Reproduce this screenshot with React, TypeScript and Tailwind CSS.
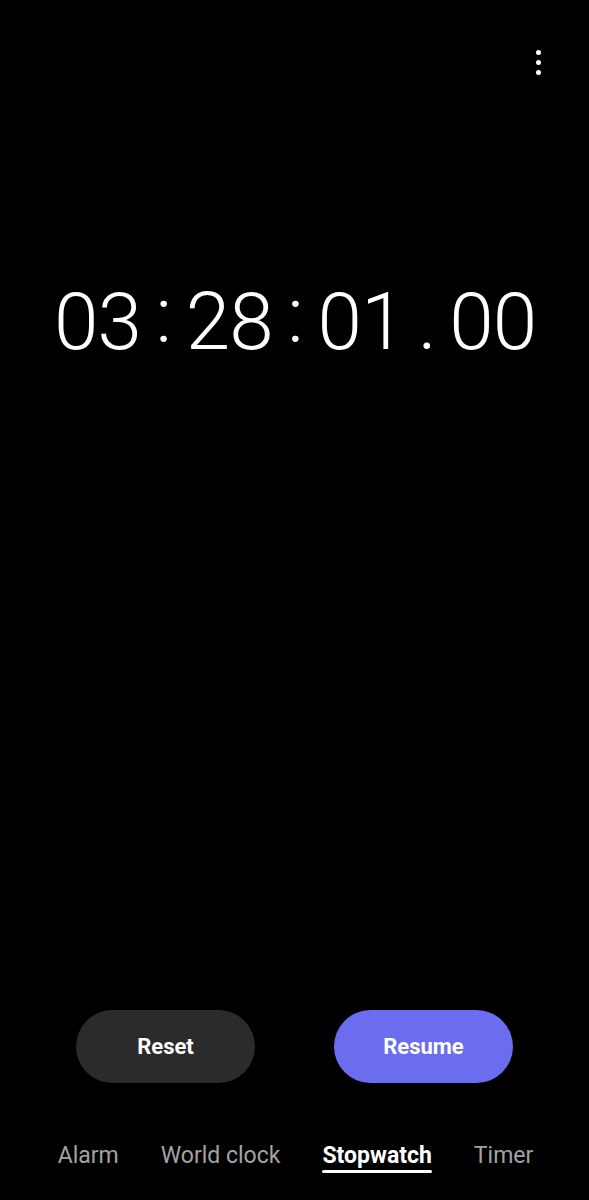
import React from 'react'

const font = { fontFamily: 'Roboto, "Liberation Sans", sans-serif' }

function Colon() {
  return <span className="inline-block w-[45px] text-center text-[78px] relative -top-[7px]">:</span>
}

export default function App() {
  return (
    <div className="w-[589px] h-[1200px] bg-black text-white flex flex-col" style={font}>
      <header className="h-[128px] flex justify-end items-start pt-[50px] pr-[48px]">
        <div className="flex flex-col items-center gap-[5px]">
          <span className="w-[5px] h-[5px] rounded-full bg-white" />
          <span className="w-[5px] h-[5px] rounded-full bg-white" />
          <span className="w-[5px] h-[5px] rounded-full bg-white" />
        </div>
      </header>

      <section className="flex justify-center items-baseline font-light text-[80px] tracking-[-1px] leading-none mt-[154px] pl-[1px]">
        <span>03</span>
        <Colon />
        <span>28</span>
        <Colon />
        <span>01</span>
        <span className="inline-block w-[45px] text-center">.</span>
        <span>00</span>
      </section>

      <div className="flex-1" />

      <section className="flex justify-center gap-[79px] mb-[56px]">
        <button className="w-[179px] h-[73px] rounded-full bg-[#2b2b2b] text-[22px] font-bold text-white">
          Reset
        </button>
        <button className="w-[179px] h-[73px] rounded-full bg-[#6c6cf0] text-[22px] font-bold text-white">
          Resume
        </button>
      </section>

      <nav className="flex justify-center gap-[42px] text-[23px] text-[#a3a3a3] h-[61px] pl-[2px]">
        <span>Alarm</span>
        <span>World clock</span>
        <span className="relative font-bold text-white">
          Stopwatch
          <span className="absolute left-0 right-0 top-[31px] h-[3px] rounded-full bg-white" />
        </span>
        <span>Timer</span>
      </nav>
    </div>
  )
}
